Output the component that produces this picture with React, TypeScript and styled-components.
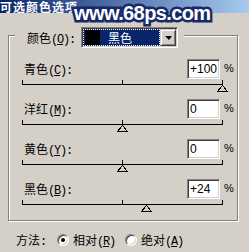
import React from "react";
import styled, { createGlobalStyle } from "styled-components";

const GlobalStyle = createGlobalStyle`
  html, body {
    margin: 0;
    padding: 0;
    background: #d4d0c8;
  }
  body {
    font-family: "Noto Sans CJK SC", "Noto Sans", sans-serif;
    font-size: 12px;
    color: #000;
  }
`;

const Window = styled.div`
  position: relative;
  width: 249px;
  height: 252px;
  overflow: hidden;
  background: #d4d0c8;
`;

const TitleBar = styled.div`
  height: 13px;
  background: linear-gradient(to right, #0a246a, #a6caf0);
  color: #fff;
  font-weight: 700;
  font-size: 12px;
  line-height: 13px;
  letter-spacing: 1px;
  white-space: nowrap;
`;

const Watermark = styled.div`
  position: absolute;
  left: 74px;
  top: 3px;
  font-family: "Liberation Sans", Arial, sans-serif;
  font-weight: 700;
  font-size: 20px;
  line-height: 20px;
  letter-spacing: -0.6px;
  color: #fff;
  -webkit-text-stroke: 5px #18296a;
  paint-order: stroke fill;
  white-space: nowrap;
`;

const Body = styled.div`
  padding: 22px 0 0 8px;
`;

const Group = styled.div`
  width: 230px;
  box-sizing: border-box;
  border: 1px solid #808080;
  box-shadow: inset 1px 1px 0 #fff, 1px 1px 0 #fff;
  display: flex;
  flex-direction: column;
`;

const GroupHeader = styled.div`
  align-self: flex-start;
  display: flex;
  align-items: center;
  height: 21px;
  margin: -9px 0 0 6px;
  padding: 0 6px 0 12px;
  background: #d4d0c8;
`;

const HeaderLabel = styled.span`
  width: 54px;
  white-space: nowrap;
`;

const Key = styled.span`
  font-family: "Liberation Mono", monospace;
  letter-spacing: -1.2px;
`;

const Combo = styled.div`
  width: 97px;
  height: 21px;
  box-sizing: border-box;
  border: 1px solid;
  border-color: #808080 #fff #fff #808080;
  box-shadow: inset 1px 1px 0 #404040, inset -1px -1px 0 #d4d0c8;
  background: #fff;
  padding: 1px;
  display: flex;
`;

const Selection = styled.div`
  flex: 1;
  display: flex;
  align-items: center;
  background: #0a246a;
  outline: 1px dotted #fff;
  outline-offset: -1px;
  padding: 0 2px;
  color: #fff;
`;

const Swatch = styled.span`
  width: 15px;
  height: 15px;
  background: #000;
  margin-right: 8px;
`;

const DropButton = styled.div`
  width: 16px;
  box-sizing: border-box;
  border: 1px solid;
  border-color: #d4d0c8 #404040 #404040 #d4d0c8;
  box-shadow: inset 1px 1px 0 #fff, inset -1px -1px 0 #808080;
  background: #d4d0c8;
  display: flex;
  align-items: center;
  justify-content: center;

  &::after {
    content: "";
    width: 0;
    height: 0;
    border-left: 4px solid transparent;
    border-right: 3px solid transparent;
    border-top: 4px solid #000;
    margin-top: 1px;
  }
`;

const Rows = styled.div`
  display: flex;
  flex-direction: column;
  gap: 6px;
  margin-top: 11px;
  padding-bottom: 7px;
`;

const Row = styled.div`
  display: flex;
  flex-direction: column;
`;

const FieldLine = styled.div`
  display: flex;
  align-items: center;
  height: 20px;
  padding: 0 4px 0 15px;
`;

const FieldLabel = styled.span`
  flex: 1;
  white-space: nowrap;
`;

const NumInput = styled.input`
  width: 33px;
  height: 20px;
  box-sizing: border-box;
  margin: 0;
  padding: 0 0 0 2px;
  border: 1px solid;
  border-color: #808080 #fff #fff #808080;
  box-shadow: inset 1px 1px 0 #404040, inset -1px -1px 0 #d4d0c8;
  background: #fff;
  font-family: "Liberation Sans", Arial, sans-serif;
  font-size: 12px;
  color: #000;
  outline: none;
`;

const Percent = styled.span`
  width: 13px;
  box-sizing: border-box;
  padding-left: 4px;
  font-family: "Liberation Sans", Arial, sans-serif;
  font-size: 11px;
  margin-top: -3px;
`;

const Track = styled.svg`
  display: block;
  margin-left: 8px;
`;

const MethodRow = styled.div`
  display: flex;
  align-items: center;
  height: 20px;
  margin-top: 9px;
  padding-left: 8px;
  white-space: nowrap;
`;

const MethodLabel = styled.span`
  width: 41px;
`;

const Radio = styled.span<{ $checked?: boolean }>`
  width: 12px;
  height: 12px;
  box-sizing: border-box;
  border-radius: 50%;
  border: 1px solid;
  border-color: #808080 #fff #fff #808080;
  box-shadow: inset 1px 1px 0 #404040, inset -1px -1px 0 #d4d0c8;
  background: #fff;
  display: flex;
  align-items: center;
  justify-content: center;
  margin-right: 4px;

  &::after {
    content: "";
    width: 4px;
    height: 4px;
    border-radius: 50%;
    background: ${(p) => (p.$checked ? "#000" : "transparent")};
  }
`;

const OptionText = styled.span`
  margin-right: 10px;
`;

const Slider = ({ value }: { value: number }) => {
  const cx = 105 + value;
  return (
    <Track width={211} height={14} viewBox="0 0 211 14" shapeRendering="crispEdges">
      <rect x={5} y={5} width={201} height={1} fill="#000" />
      <rect x={5} y={1} width={1} height={5} fill="#000" />
      <rect x={105} y={1} width={1} height={5} fill="#000" />
      <rect x={205} y={1} width={1} height={5} fill="#000" />
      <polygon
        points={`${cx + 0.5},6.5 ${cx - 4.5},12.5 ${cx + 5.5},12.5`}
        fill="#d4d0c8"
        stroke="#000"
        strokeWidth={1}
      />
    </Track>
  );
};

const channels = [
  { name: "青色", key: "C", value: 100 },
  { name: "洋红", key: "M", value: 0 },
  { name: "黄色", key: "Y", value: 0 },
  { name: "黑色", key: "B", value: 24 },
];

const fmt = (v: number) => (v > 0 ? `+${v}` : `${v}`);

const App = () => {
  return (
    <>
      <GlobalStyle />
      <Window>
        <TitleBar>可选颜色选项</TitleBar>
        <Watermark>www.68ps.com</Watermark>
        <Body>
          <Group>
            <GroupHeader>
              <HeaderLabel>
                颜色<Key>(<u>O</u>):</Key>
              </HeaderLabel>
              <Combo>
                <Selection>
                  <Swatch />
                  黑色
                </Selection>
                <DropButton />
              </Combo>
            </GroupHeader>
            <Rows>
              {channels.map((c) => (
                <Row key={c.key}>
                  <FieldLine>
                    <FieldLabel>
                      {c.name}
                      <Key>
                        (<u>{c.key}</u>):
                      </Key>
                    </FieldLabel>
                    <NumInput readOnly value={fmt(c.value)} />
                    <Percent>%</Percent>
                  </FieldLine>
                  <Slider value={c.value} />
                </Row>
              ))}
            </Rows>
          </Group>
          <MethodRow>
            <MethodLabel>
              方法<Key>:</Key>
            </MethodLabel>
            <Radio $checked />
            <OptionText>
              相对<Key>(<u>R</u>)</Key>
            </OptionText>
            <Radio />
            <OptionText>
              绝对<Key>(<u>A</u>)</Key>
            </OptionText>
          </MethodRow>
        </Body>
      </Window>
    </>
  );
};

export default App;
